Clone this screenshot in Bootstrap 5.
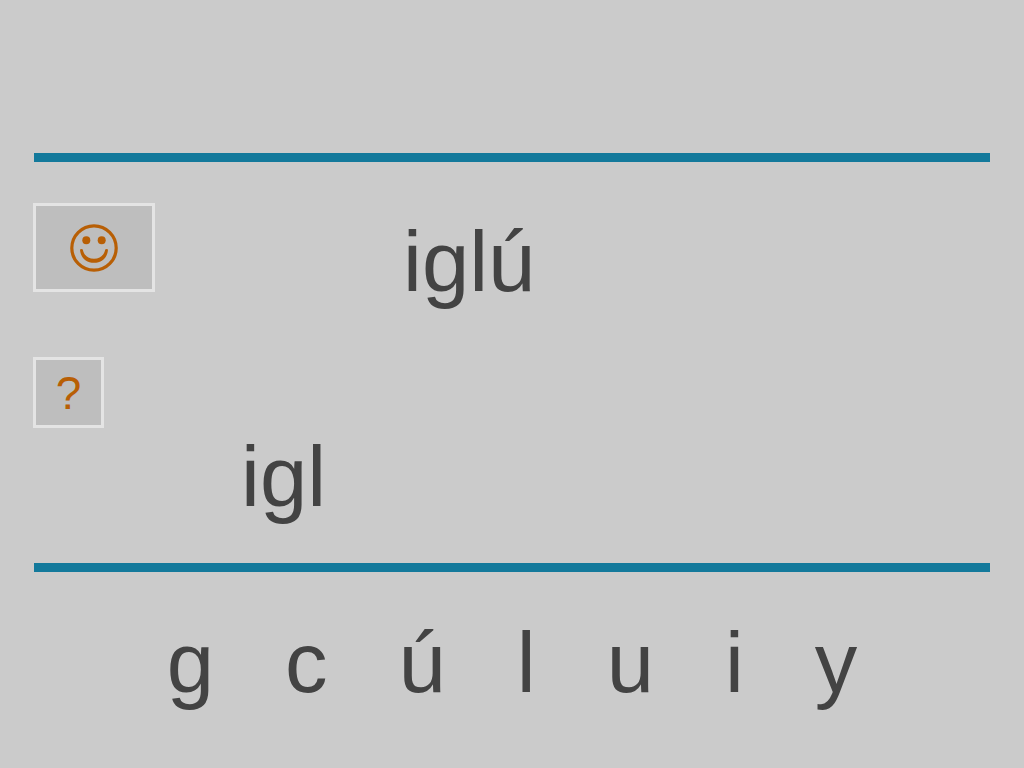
<!DOCTYPE html>
<html lang="es">
<head>
<meta charset="utf-8">
<meta name="viewport" content="width=device-width, initial-scale=1">
<title>iglú</title>
<link href="https://cdn.jsdelivr.net/npm/bootstrap@5.3.0/dist/css/bootstrap.min.css" rel="stylesheet">
<style>
body { background: #cbcbcb; color: #434343; font-family: "Liberation Sans", Arial, sans-serif; }
.board { padding: 153px 34px 40px; }
.divider { height: 9px; background: #13799b; border: 0; opacity: 1; margin: 0; }
.glyphs { font-size: 85px; line-height: 96px; }
.play-area { padding: 41px 0 38px; margin-left: -1px; }
.tile { background: #bebebe; border: 3px solid #e4e4e4; border-radius: 0; color: #b85f05; padding: 0; }
.tile:hover { background: #b4b4b4; border-color: #e4e4e4; color: #b85f05; }
.tile-smile { width: 122px; height: 89px; }
.tile-hint { width: 71px; height: 71px; font-size: 46px; line-height: 64px; }
.model { margin: 11px 0 0 248px; }
.answer-row { padding-top: 47px; }
.answer { margin: 72px 0 0 137px; }
.letters { gap: 71px; padding-top: 43px; }
.letter { color: inherit; line-height: inherit; }
</style>
</head>
<body>
<main class="board">
  <hr class="divider">
  <section class="play-area">
    <div class="d-flex align-items-start">
      <button type="button" class="btn tile tile-smile d-flex align-items-center justify-content-center flex-shrink-0" aria-label="Muy bien">
        <svg width="48" height="48" viewBox="0 0 48 48" fill="none" stroke="currentColor" stroke-width="3.2" aria-hidden="true">
          <circle cx="24" cy="24" r="22.2"/>
          <path fill="currentColor" stroke="none" d="M10 25.500Q11.500 24.500 12.800 25.500C14 31.500 18 34.800 24 34.800S34 31.500 35.200 25.500Q36.500 24.500 38 25.500C37.500 33.500 32 38.800 24 38.800S10.500 33.500 10 25.500Z"/>
          <circle cx="16.300" cy="16.300" r="4" fill="currentColor" stroke="none"/>
          <circle cx="31.700" cy="16.300" r="4" fill="currentColor" stroke="none"/>
        </svg>
      </button>
      <p class="model glyphs">iglú</p>
    </div>
    <div class="answer-row d-flex align-items-start">
      <button type="button" class="btn tile tile-hint flex-shrink-0">?</button>
      <p class="answer glyphs">igl</p>
    </div>
  </section>
  <hr class="divider">
  <section class="letters glyphs d-flex flex-wrap justify-content-center">
    <button type="button" class="letter border-0 bg-transparent p-0">g</button>
    <button type="button" class="letter border-0 bg-transparent p-0">c</button>
    <button type="button" class="letter border-0 bg-transparent p-0">ú</button>
    <button type="button" class="letter border-0 bg-transparent p-0">l</button>
    <button type="button" class="letter border-0 bg-transparent p-0">u</button>
    <button type="button" class="letter border-0 bg-transparent p-0">i</button>
    <button type="button" class="letter border-0 bg-transparent p-0">y</button>
  </section>
</main>
<script src="https://cdn.jsdelivr.net/npm/bootstrap@5.3.0/dist/js/bootstrap.bundle.min.js"></script>
</body>
</html>
